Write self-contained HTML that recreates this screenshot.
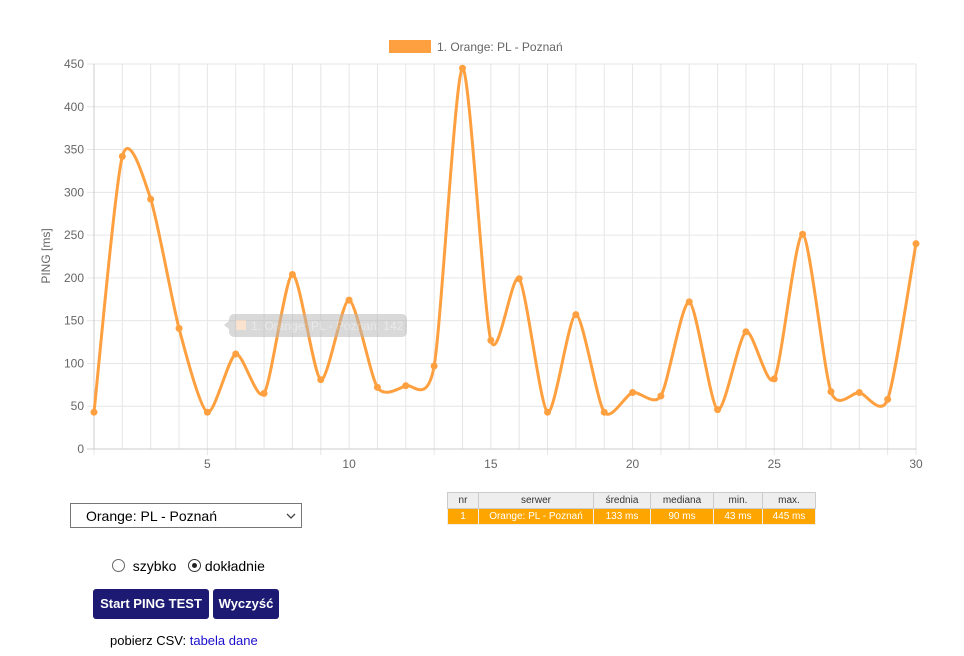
<!DOCTYPE html>
<html><head><meta charset="utf-8"><style>
body{margin:0;width:964px;height:656px;background:#fff;font-family:"Liberation Sans",Arial,sans-serif;position:relative;overflow:hidden}
.abs{position:absolute}
table{border-collapse:collapse;font-size:10px}
td{border:1px solid #ccc;text-align:center;height:15px;padding:0}
.h td{background:#eee;color:#333}
.r td{background:#ffa500;color:#fff;border-color:#eee}
.btn{position:absolute;top:589px;height:30px;background:#1c1a72;color:#fff;font-size:13px;font-weight:bold;border-radius:3px;line-height:30px;text-align:center}
.radio{display:inline-block;width:11px;height:11px;border:1px solid #666;border-radius:50%;vertical-align:-1px;position:relative}
</style></head><body>
<svg id="c" class="abs" style="left:0;top:0" width="964" height="480"></svg>
<table class="abs" style="left:447px;top:492px;width:369px">
<tr class="h"><td style="width:30px">nr</td><td style="width:114px">serwer</td><td style="width:56px">średnia</td><td style="width:62px">mediana</td><td style="width:48px">min.</td><td>max.</td></tr>
<tr class="r"><td>1</td><td>Orange: PL - Poznań</td><td>133 ms</td><td>90 ms</td><td>43 ms</td><td>445 ms</td></tr>
</table>
<div class="abs" style="left:70px;top:503px;width:230px;height:25px;border:1px solid #767676;font-size:14px;line-height:25px;box-sizing:border-box;width:232px;padding-left:15px;color:#000">Orange: PL - Poznań<svg class="abs" style="right:5px;top:9px" width="10" height="6"><path d="M1 1l4 4 4-4" fill="none" stroke="#444" stroke-width="1.3"/></svg></div>
<div class="abs" style="left:112px;top:558px;font-size:14px;color:#000"><span class="radio"></span>&nbsp; szybko &nbsp;&nbsp;<span class="radio" style="border-color:#333"><span style="position:absolute;left:3px;top:3px;width:5px;height:5px;border-radius:50%;background:#222"></span></span> dokładnie</div>
<div class="btn" style="left:93px;width:116px">Start PING TEST</div>
<div class="btn" style="left:213px;width:66px">Wyczyść</div>
<div class="abs" style="left:110px;top:633px;font-size:13px;color:#000">pobierz CSV: <span style="color:#1a0dcc">tabela</span> <span style="color:#1a0dcc">dane</span></div>
<script>
var d=[43,342,292,141,43,111,65,204,81,174,72,74,97,445,127,199,43,157,43,66,62,172,46,137,82,251,67,66,58,240];
var X=i=>94+(i)*822/29, Y=v=>449-v*385/450;
var s='';
for(var i=0;i<30;i++){var x=X(i);s+='<line x1="'+x+'" y1="64" x2="'+x+'" y2="'+(i%4==0||i==29?455:449)+'" stroke="#e6e6e6"/>';}
for(var v=0;v<=450;v+=50){var y=Y(v);s+='<line x1="87" y1="'+y+'" x2="916" y2="'+y+'" stroke="'+(v==0?'#ccc':'#e6e6e6')+'"/><text x="84" y="'+(y+4)+'" text-anchor="end" font-size="12" fill="#666">'+v+'</text>';}
s+='<line x1="94" y1="64" x2="94" y2="449" stroke="#ccc"/>';
[5,10,15,20,25,30].forEach(n=>{s+='<text x="'+X(n-1)+'" y="468" text-anchor="middle" font-size="12" fill="#666">'+n+'</text>'});
s+='<text transform="translate(50,256) rotate(-90)" text-anchor="middle" font-size="12" fill="#666">PING [ms]</text>';
s+='<rect x="389" y="40" width="42" height="13" fill="#ffa040"/><text x="437" y="51" font-size="12" fill="#666">1. Orange: PL - Poznań</text>';
var p=d.map((v,i)=>[X(i),Y(v)]),t=0.25,path='M'+p[0];
for(var i=0;i<29;i++){var p0=p[i-1]||p[i],p1=p[i],p2=p[i+1],p3=p[i+2]||p2;
var c1=[p1[0]+(p2[0]-p0[0])*t/2,p1[1]+(p2[1]-p0[1])*t/2],c2=[p2[0]-(p3[0]-p1[0])*t/2,p2[1]-(p3[1]-p1[1])*t/2];
path+=' C'+c1+' '+c2+' '+p2;}
s+='<path d="'+path+'" fill="none" stroke="#ffa040" stroke-width="3"/>';
p.forEach(q=>{s+='<circle cx="'+q[0]+'" cy="'+q[1]+'" r="3.5" fill="#ffa040"/>'});
s+='<g opacity="0.5"><path d="M224 325l6-5v10z" fill="#b5b5b5"/><rect x="229" y="314" width="178" height="23" rx="5" fill="#b5b5b5"/><rect x="236" y="320" width="10" height="10" fill="#f4c9a0"/><text x="251" y="330" font-size="12" fill="#d5d5d5">1. Orange: PL - Poznań: 142</text></g>';
document.getElementById('c').innerHTML=s;
</script>
</body></html>
